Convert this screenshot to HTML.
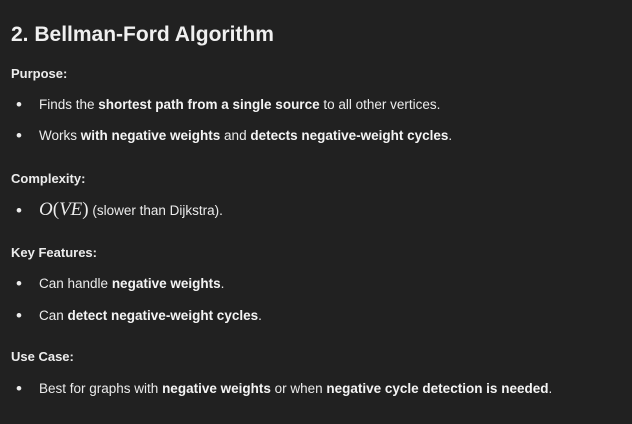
<!DOCTYPE html>
<html><head><style>
body{margin:0;width:632px;height:424px;background:#212121;color:#ececec;font-family:"Liberation Sans",sans-serif;overflow:hidden;position:relative}
div{position:absolute;white-space:nowrap;line-height:1}
.h{left:11px;top:24px;font-size:21px;font-weight:bold;color:#f0f0f0}
.s{left:11px;font-size:13px;font-weight:bold}
.b{left:39px;font-size:13.5px}
.d{left:16px;font-size:17px}
b{font-weight:bold;color:#f4f4f4}
.m{font-family:"Liberation Serif",serif;font-style:italic;font-size:19px}
</style></head><body>
<div class="h">2. Bellman-Ford Algorithm</div>
<div class="s" style="top:67px">Purpose:</div>
<div class="d" style="top:96px">•</div>
<div class="b" style="top:98px">Finds the <b>shortest path from a single source</b> to all other vertices.</div>
<div class="d" style="top:127px">•</div>
<div class="b" style="top:129px">Works <b>with negative weights</b> and <b>detects negative-weight cycles</b>.</div>
<div class="s" style="top:172px">Complexity:</div>
<div class="d" style="top:202px">•</div>
<div class="b" style="top:200px"><span class="m">O</span><span class="m" style="font-style:normal">(</span><span class="m">VE</span><span class="m" style="font-style:normal">)</span> (slower than Dijkstra).</div>
<div class="s" style="top:246px">Key Features:</div>
<div class="d" style="top:275px">•</div>
<div class="b" style="top:277px">Can handle <b>negative weights</b>.</div>
<div class="d" style="top:307px">•</div>
<div class="b" style="top:309px">Can <b>detect negative-weight cycles</b>.</div>
<div class="s" style="top:350px">Use Case:</div>
<div class="d" style="top:380px">•</div>
<div class="b" style="top:382px">Best for graphs with <b>negative weights</b> or when <b>negative cycle detection is needed</b>.</div>
</body></html>
